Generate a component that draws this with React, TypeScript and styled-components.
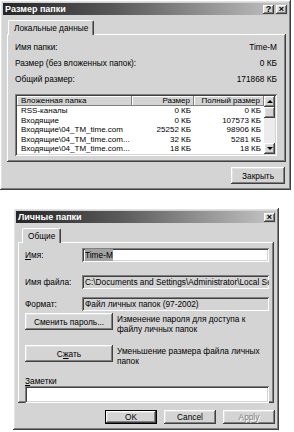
import styled, { createGlobalStyle, css } from 'styled-components';

const GlobalStyle = createGlobalStyle`
  html, body { margin: 0; padding: 0; background: #fff; }
  body {
    font-family: "Liberation Sans", Arial, sans-serif;
    font-size: 8.3px;
    color: #000;
  }
  * { box-sizing: border-box; }
`;

const raised = css`
  box-shadow: inset -1px -1px #404040, inset 1px 1px #fff, inset -2px -2px #808080, inset 2px 2px #e2e2e2;
`;

const sunken = css`
  box-shadow: inset 1px 1px #808080, inset -1px -1px #fff, inset 2px 2px #404040, inset -2px -2px #d4d4d4;
`;

const folders = [
  { name: 'RSS-каналы', size: '0 КБ', total: '0 КБ' },
  { name: 'Входящие', size: '0 КБ', total: '107573 КБ' },
  { name: 'Входящие\\04_TM_time.com', size: '25252 КБ', total: '98906 КБ' },
  { name: 'Входящие\\04_TM_time.com...', size: '32 КБ', total: '5281 КБ' },
  { name: 'Входящие\\04_TM_time.com...', size: '18 КБ', total: '18 КБ' },
];

export default function App() {
  return (
    <>
      <GlobalStyle />
      <Window $width={291} $height={190} $left={0} $top={0}>
        <TitleBar>
          <span>Размер папки</span>
          <TitleButtons>
            <TitleButton>?</TitleButton>
            <TitleButton>×</TitleButton>
          </TitleButtons>
        </TitleBar>
        <TabArea $pad="5px 2px 0 4px">
          <TabStrip $indent={1}>
            <Tab>Локальные данные</Tab>
          </TabStrip>
          <SizePanel>
            <InfoRow>
              <span>Имя папки:</span>
              <span>Time-M</span>
            </InfoRow>
            <InfoRow>
              <span>Размер (без вложенных папок):</span>
              <span>0 КБ</span>
            </InfoRow>
            <InfoRow>
              <span>Общий размер:</span>
              <span>171868 КБ</span>
            </InfoRow>
            <FolderList>
              <Table>
                <GridRow $header>
                  <HeaderCell>Вложенная папка</HeaderCell>
                  <HeaderCell $right>Размер</HeaderCell>
                  <HeaderCell $right>Полный размер</HeaderCell>
                </GridRow>
                {folders.map((f, i) => (
                  <GridRow key={i}>
                    <Cell>{f.name}</Cell>
                    <Cell $right>{f.size}</Cell>
                    <Cell $right>{f.total}</Cell>
                  </GridRow>
                ))}
              </Table>
              <Scrollbar>
                <ScrollButton><Arrow $dir="up" /></ScrollButton>
                <Thumb />
                <Track />
                <ScrollButton><Arrow $dir="down" /></ScrollButton>
              </Scrollbar>
            </FolderList>
          </SizePanel>
        </TabArea>
        <Footer $gap={0} $pad="5px 3px 0 0">
          <DialogButton $w={54} $h={17}>Закрыть</DialogButton>
        </Footer>
      </Window>

      <Window $width={266} $height={222} $left={13} $top={18}>
        <TitleBar>
          <span>Личные папки</span>
          <TitleButtons>
            <TitleButton>×</TitleButton>
          </TitleButtons>
        </TitleBar>
        <TabArea $pad="5px 2px 0 2px">
          <TabStrip $indent={4}>
            <Tab>Общие</Tab>
          </TabStrip>
          <GeneralPanel>
            <FieldRow $mt={0}>
              <FieldLabel><u>И</u>мя:</FieldLabel>
              <TextField $bg="#fff" $h={14}>
                <Selected>Time-M</Selected>
              </TextField>
            </FieldRow>
            <FieldRow $mt={13}>
              <FieldLabel>Имя файла:</FieldLabel>
              <TextField $bg="#d4d4d4" $h={14}>
                C:\Documents and Settings\Administrator\Local Settings\Application Data\Microsoft\Outlook
              </TextField>
            </FieldRow>
            <FieldRow $mt={8}>
              <FieldLabel>Формат:</FieldLabel>
              <TextField $bg="#d4d4d4" $h={14}>Файл личных папок (97-2002)</TextField>
            </FieldRow>
            <ActionRow $mt={2}>
              <DialogButton $w={88} $h={17}>Сменить пароль...</DialogButton>
              <ActionText>
                Изменение пароля для доступа к<br />файлу личных папок
              </ActionText>
            </ActionRow>
            <ActionRow $mt={11}>
              <DialogButton $w={88} $h={17}>С<u>ж</u>ать</DialogButton>
              <ActionText>
                Уменьшение размера файла личных<br />папок
              </ActionText>
            </ActionRow>
            <NotesLabel><u>З</u>аметки</NotesLabel>
            <TextField $bg="#fff" $h={19} />
          </GeneralPanel>
        </TabArea>
        <Footer $gap={7} $pad="7px 1px 0 0">
          <DialogButton $w={52} $h={14} $default>OK</DialogButton>
          <DialogButton $w={52} $h={14}>Cancel</DialogButton>
          <DialogButton $w={52} $h={14} disabled>Apply</DialogButton>
        </Footer>
      </Window>
    </>
  );
}

const Window = styled.section<{ $width: number; $height: number; $left: number; $top: number }>`
  width: ${({ $width }) => $width}px;
  height: ${({ $height }) => $height}px;
  margin: ${({ $top }) => $top}px 0 0 ${({ $left }) => $left}px;
  padding: 3px;
  background: #d4d4d4;
  display: flex;
  flex-direction: column;
  ${raised}
`;

const TitleBar = styled.div`
  height: 12px;
  flex-shrink: 0;
  display: flex;
  align-items: center;
  justify-content: space-between;
  padding: 0 1px 0 2px;
  background: linear-gradient(90deg, #262626 0%, #5a5a5a 40%, #c6c6c6 100%);
  color: #fff;
  font-size: 9px;
  font-weight: bold;
`;

const TitleButtons = styled.div`
  display: flex;
  gap: 2px;
`;

const TitleButton = styled.div`
  width: 11px;
  height: 9px;
  display: flex;
  align-items: center;
  justify-content: center;
  background: #d4d4d4;
  color: #000;
  font-size: 9px;
  font-weight: bold;
  line-height: 1;
  ${raised}
`;

const TabArea = styled.div<{ $pad: string }>`
  padding: ${({ $pad }) => $pad};
`;

const TabStrip = styled.div<{ $indent: number }>`
  display: flex;
  height: 14px;
  padding-left: ${({ $indent }) => $indent}px;
  position: relative;
  z-index: 1;
`;

const Tab = styled.div`
  height: 15px;
  padding: 0 5px 1px;
  display: flex;
  align-items: center;
  background: #d4d4d4;
  border-top: 1px solid #fff;
  border-left: 1px solid #fff;
  border-right: 1px solid #404040;
  border-radius: 2px 2px 0 0;
  box-shadow: inset -1px 0 #808080;
`;

const panelEdge = css`
  background: #d4d4d4;
  box-shadow: inset -1px -1px #404040, inset 1px 1px #fff, inset -2px -2px #808080;
`;

const SizePanel = styled.div`
  height: 128px;
  padding: 5px 9px 0 8px;
  ${panelEdge}
`;

const InfoRow = styled.div`
  height: 16px;
  display: flex;
  align-items: center;
  justify-content: space-between;
  white-space: nowrap;
`;

const FolderList = styled.div`
  margin-top: 7px;
  height: 62px;
  padding: 2px;
  display: flex;
  background: #fff;
  overflow: hidden;
  font-size: 8px;
  ${sunken}
`;

const Table = styled.div`
  flex: 1;
  min-width: 0;
  overflow: hidden;
`;

const GridRow = styled.div<{ $header?: boolean }>`
  display: grid;
  grid-template-columns: 115px 62px 1fr;
  height: ${({ $header }) => ($header ? 10 : 9.6)}px;
  line-height: ${({ $header }) => ($header ? 10 : 9.6)}px;
`;

const HeaderCell = styled.div<{ $right?: boolean }>`
  padding: 0 4px;
  text-align: ${({ $right }) => ($right ? 'right' : 'left')};
  background: #d4d4d4;
  white-space: nowrap;
  overflow: hidden;
  box-shadow: inset -1px -1px #808080, inset 1px 1px #fff;
`;

const Cell = styled.div<{ $right?: boolean }>`
  padding: 0 3px 0 4px;
  text-align: ${({ $right }) => ($right ? 'right' : 'left')};
  white-space: nowrap;
  overflow: hidden;
`;

const Scrollbar = styled.div`
  width: 11px;
  flex-shrink: 0;
  display: flex;
  flex-direction: column;
  background: #ececec;
`;

const ScrollButton = styled.div`
  height: 11px;
  display: flex;
  align-items: center;
  justify-content: center;
  background: #d4d4d4;
  ${raised}
`;

const Thumb = styled.div`
  height: 11px;
  background: #d4d4d4;
  ${raised}
`;

const Track = styled.div`
  flex: 1;
`;

const Arrow = styled.span<{ $dir: 'up' | 'down' }>`
  width: 0;
  height: 0;
  border-left: 3px solid transparent;
  border-right: 3px solid transparent;
  ${({ $dir }) =>
    $dir === 'up' ? 'border-bottom: 3px solid #000;' : 'border-top: 3px solid #000;'}
`;

const Footer = styled.div<{ $gap: number; $pad: string }>`
  display: flex;
  justify-content: flex-end;
  gap: ${({ $gap }) => $gap}px;
  padding: ${({ $pad }) => $pad};
`;

const DialogButton = styled.button<{ $w: number; $h: number; $default?: boolean }>`
  width: ${({ $w }) => $w}px;
  height: ${({ $h }) => $h}px;
  padding: 0;
  font: inherit;
  color: #000;
  background: #d4d4d4;
  border: ${({ $default }) => ($default ? '1px solid #000' : 'none')};
  flex-shrink: 0;
  ${raised}

  &:disabled {
    color: #808080;
    text-shadow: 1px 1px #fff;
  }
`;

const GeneralPanel = styled.div`
  height: 161px;
  padding: 6px 5px 0 7px;
  display: flex;
  flex-direction: column;
  ${panelEdge}
`;

const FieldRow = styled.div<{ $mt: number }>`
  display: flex;
  align-items: center;
  margin-top: ${({ $mt }) => $mt}px;
`;

const FieldLabel = styled.div`
  width: 57px;
  flex-shrink: 0;
  white-space: nowrap;
`;

const TextField = styled.div<{ $bg: string; $h: number }>`
  flex: 1;
  min-width: 0;
  height: ${({ $h }) => $h}px;
  line-height: ${({ $h }) => $h}px;
  padding: 0 3px;
  background: ${({ $bg }) => $bg};
  white-space: nowrap;
  overflow: hidden;
  ${sunken}
`;

const Selected = styled.span`
  background: #a2a2a2;
  padding: 1px 0;
`;

const ActionRow = styled.div<{ $mt: number }>`
  display: flex;
  align-items: flex-start;
  gap: 4px;
  margin-top: ${({ $mt }) => $mt}px;
`;

const ActionText = styled.div`
  line-height: 10px;
  padding-top: 1px;
  white-space: nowrap;
`;

const NotesLabel = styled.div`
  margin-top: 10px;
  line-height: 10px;
`;
